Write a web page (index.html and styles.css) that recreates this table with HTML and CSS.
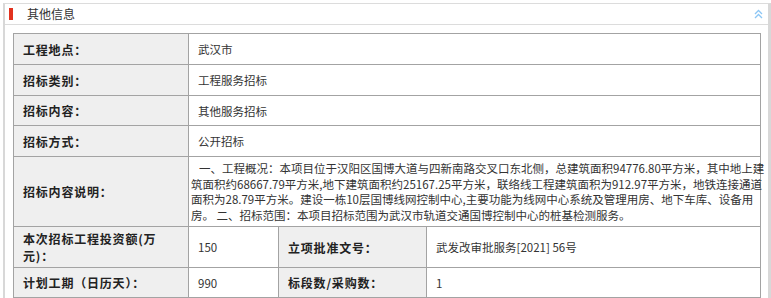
FILE: index.html
```html
<!DOCTYPE html>
<html lang="zh-CN">
<head>
<meta charset="utf-8">
<title>其他信息</title>
<link rel="stylesheet" href="styles.css">
</head>
<body>
<section class="panel">
  <header class="panel-head">
    <span class="mark"></span>
    <h2 class="title">其他信息</h2>
    <svg class="collapse" width="9" height="10" viewBox="0 0 9 10" aria-hidden="true">
      <polyline points="1,5 4.5,1.5 8,5" />
      <polyline points="1,9 4.5,5.5 8,9" />
    </svg>
  </header>
  <div class="info">
    <div class="cell label">工程地点：</div>
    <div class="cell value span3">武汉市</div>

    <div class="cell label">招标类别：</div>
    <div class="cell value span3">工程服务招标</div>

    <div class="cell label">招标内容：</div>
    <div class="cell value span3">其他服务招标</div>

    <div class="cell label">招标方式：</div>
    <div class="cell value span3">公开招标</div>

    <div class="cell label">招标内容说明：</div>
    <div class="cell desc span3">一、工程概况：本项目位于汉阳区国博大道与四新南路交叉口东北侧，总建筑面积94776.80平方米，其中地上建<br>筑面积约68667.79平方米,地下建筑面积约25167.25平方米，联络线工程建筑面积为912.97平方米，地铁连接通道<br>面积为28.79平方米。建设一栋10层国博线网控制中心,主要功能为线网中心系统及管理用房、地下车库、设备用<br>房。 二、招标范围：本项目招标范围为武汉市轨道交通国博控制中心的桩基检测服务。</div>

    <div class="cell label">本次招标工程投资额(万元)：</div>
    <div class="cell value">150</div>
    <div class="cell label">立项批准文号：</div>
    <div class="cell value">武发改审批服务[2021] 56号</div>

    <div class="cell label">计划工期（日历天）：</div>
    <div class="cell value">990</div>
    <div class="cell label">标段数/采购数：</div>
    <div class="cell value">1</div>
  </div>
</section>
</body>
</html>
```
FILE: styles.css
```css
html, body {
  margin: 0;
  padding: 0;
  background: #fff;
}

body {
  font-family: "Liberation Sans Narrow", "Noto Sans CJK SC", "Noto Sans", sans-serif;
  color: #333;
}

.panel {
  margin: 3px 0 0 3px;
  border-top: 1px solid #dcdcdc;
  border-left: 2px solid #d8d8d8;
  border-right: 3px solid #d8d8d8;
}

.panel-head {
  display: flex;
  align-items: center;
  height: 20px;
  padding: 0 5px 0 4px;
  border-bottom: 1px solid #dcdcdc;
}

.mark {
  width: 4px;
  height: 12px;
  background: #e2321f;
  margin-right: 14px;
  flex: none;
}

.title {
  margin: 0;
  flex: 1;
  font-size: 12px;
  font-weight: normal;
  color: #333;
  font-family: "Noto Sans CJK SC", sans-serif;
  line-height: 20px;
}

.collapse {
  flex: none;
  fill: none;
  stroke: #8cc6f5;
  stroke-width: 1.3;
}

.info {
  margin: 8px 7px 0 8px;
  width: 747px;
  display: grid;
  grid-template-columns: 175px 90px 148px 334px;
  grid-template-rows: 31px 31px 30px 31px auto 41px 30px;
  border-top: 1px solid #a3a3a3;
  border-left: 1px solid #a3a3a3;
}

.cell {
  border-right: 1px solid #a3a3a3;
  border-bottom: 1px solid #a3a3a3;
  display: flex;
  align-items: center;
  box-sizing: border-box;
}

.label {
  background: #efefef;
  padding: 0 8px 0 9px;
  font-family: "Noto Sans CJK SC", sans-serif;
  font-size: 12px;
  font-weight: bold;
  letter-spacing: 0.8px;
  line-height: 17px;
  color: #222;
}

.value {
  padding: 0 8px 0 9px;
  font-size: 11.5px;
  line-height: 16px;
  color: #333;
}

.span3 {
  grid-column: span 3;
}

.desc {
  display: block;
  padding: 4px 2px 3px 2px;
  font-size: 11.5px;
  line-height: 15.5px;
  white-space: nowrap;
  text-indent: 8px;
  color: #333;
}
```
